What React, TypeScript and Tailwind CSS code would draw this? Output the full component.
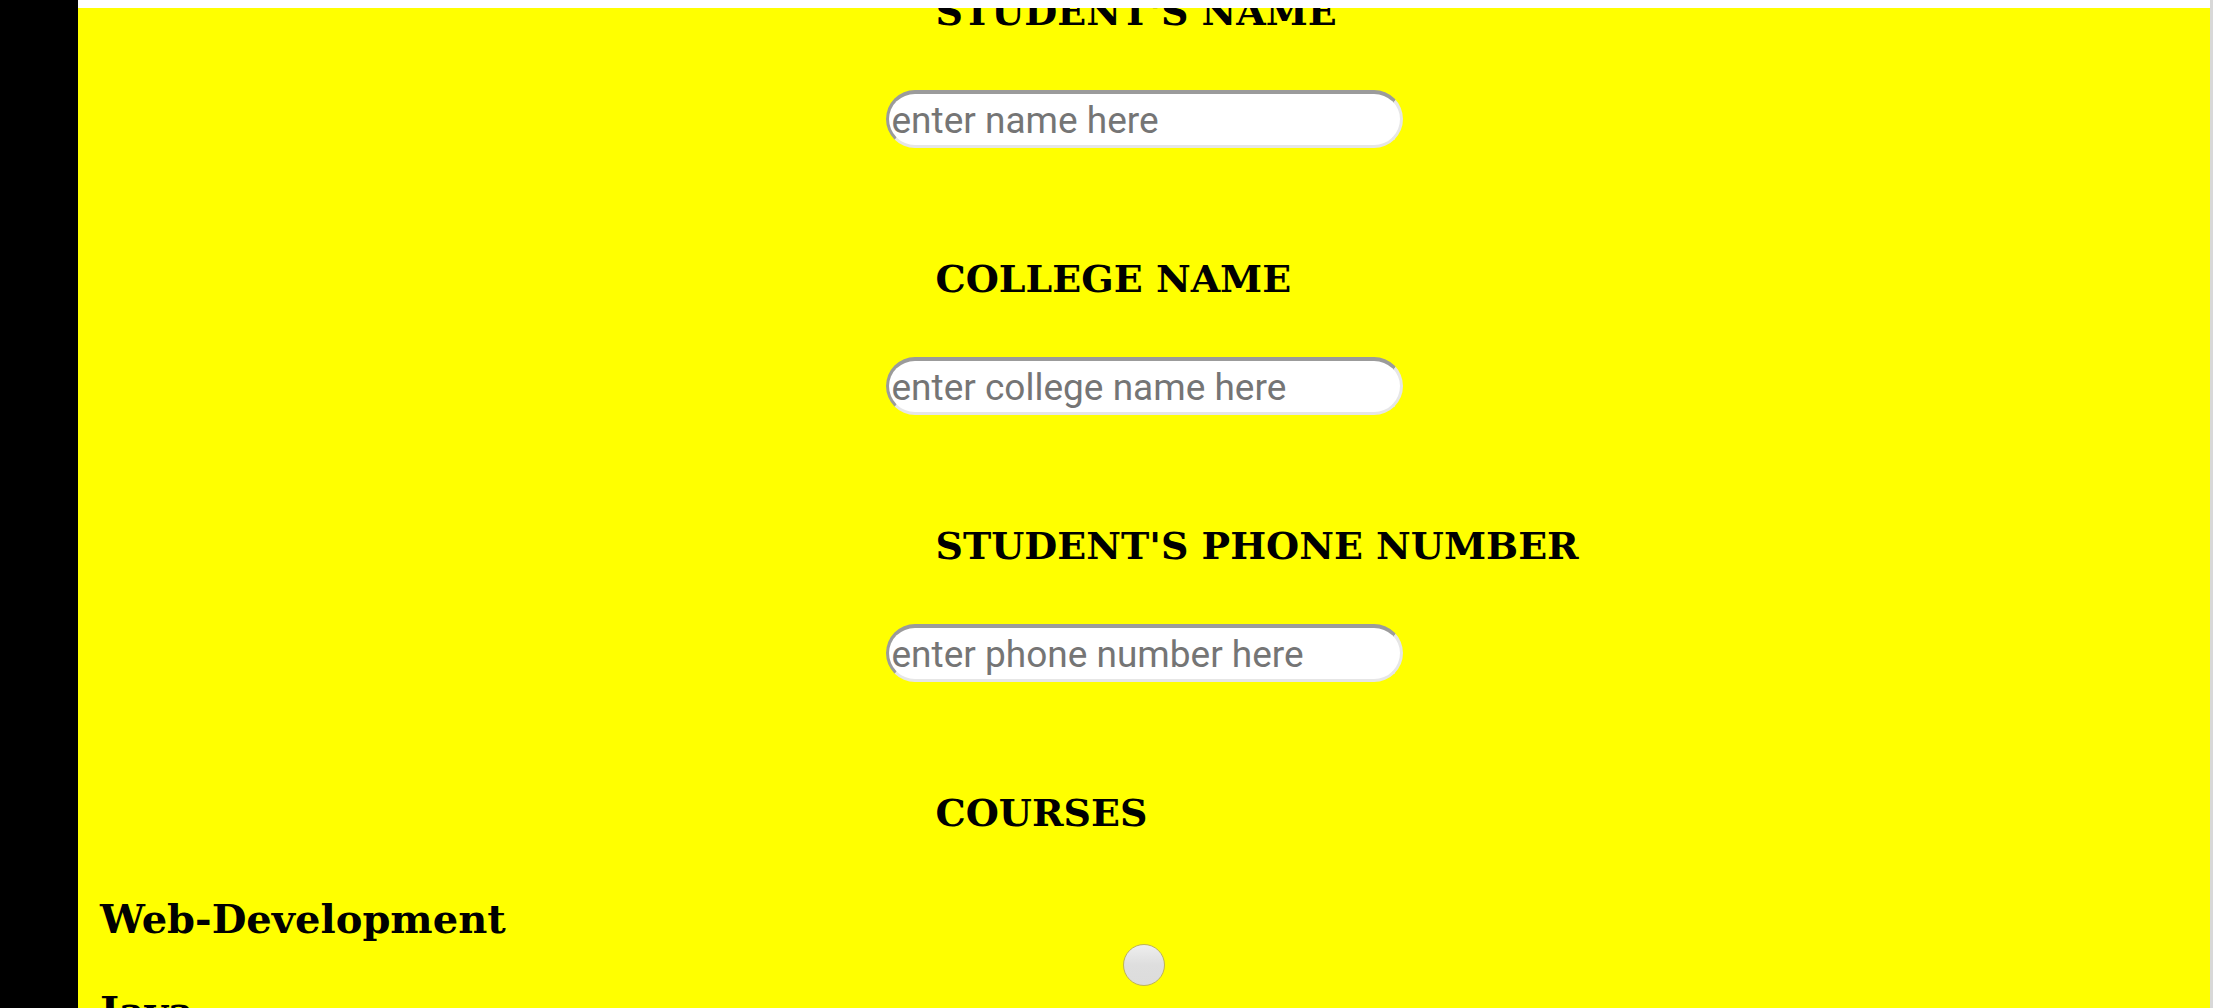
import React from "react";

const serif = { fontFamily: '"DejaVu Serif", serif' };

function Heading({ text }: { text: string }) {
  return (
    <div className="mx-auto w-[517px] pl-[50px] whitespace-nowrap">
      <h2
        className="text-[38px] leading-[48px] font-bold text-black"
        style={serif}
      >
        {text}
      </h2>
    </div>
  );
}

function Field({ placeholder }: { placeholder: string }) {
  return (
    <div className="mx-auto mt-[54px] w-[517px]">
      <input
        type="text"
        placeholder={placeholder}
        className="box-border block h-[58px] w-full rounded-full border-[3px] border-t-[4px] border-solid border-t-[#9b9b9b] border-l-[#9b9b9b] border-b-[#e6e6e6] border-r-[#e6e6e6] bg-white pl-[3px] pt-[2px] text-[37px] text-black outline-none placeholder:text-[#757575]"
        style={{ fontFamily: 'Roboto, "Noto Sans", sans-serif' }}
      />
    </div>
  );
}

function Radio() {
  return (
    <div className="flex h-[44px] items-center justify-center">
      <div className="h-[42px] w-[42px] rounded-full border border-[#bdb35a] bg-gradient-to-b from-[#eeeeee] via-[#dedede] to-[#dcdcdc]" />
    </div>
  );
}

function Course({ name }: { name: string }) {
  return (
    <div>
      <div
        className="pl-[22px] text-[40px] leading-[48px] font-bold text-black whitespace-nowrap"
        style={serif}
      >
        {name}
      </div>
      <Radio />
    </div>
  );
}

export default function App() {
  const sections = [
    { h: "STUDENT'S NAME", p: "enter name here" },
    { h: "COLLEGE NAME", p: "enter college name here" },
    { h: "STUDENT'S PHONE NUMBER", p: "enter phone number here" },
  ];
  return (
    <div className="relative flex h-[1008px] w-[2234px] overflow-hidden bg-white">
      <div className="h-full w-[78px] shrink-0 bg-black" />
      <div className="relative h-full w-[2132px] shrink-0 overflow-hidden bg-[#ffff00]">
        <div className="mt-[-12px]">
          {sections.map((s) => (
            <div key={s.h} className="mb-[107px]">
              <Heading text={s.h} />
              <Field placeholder={s.p} />
            </div>
          ))}
          <Heading text="COURSES" />
          <div className="mt-[58px]">
            <Course name="Web-Development" />
            <Course name="Java" />
            <Course name="Python" />
          </div>
        </div>
        <div className="absolute left-0 top-0 h-[8px] w-full bg-white" />
      </div>
      <div className="h-full w-[3px] shrink-0 bg-[#d8d8d8]" />
      <div className="h-full flex-1 bg-white" />
    </div>
  );
}
